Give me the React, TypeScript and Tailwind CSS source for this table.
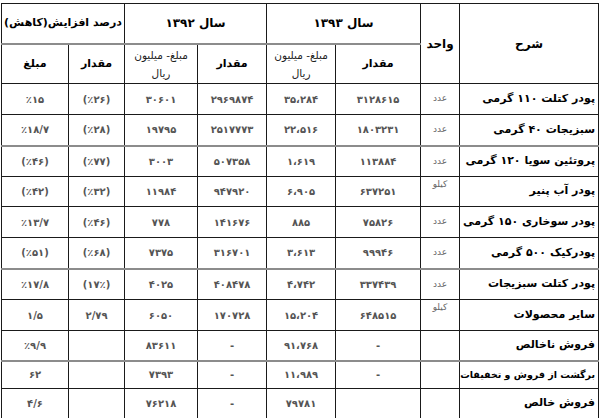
import React from "react";

type Row = {
  name: string;
  small?: boolean;
  unit: string;
  unitTop?: boolean;
  q93: string;
  a93: string;
  q92: string;
  a92: string;
  pq: string;
  pa: string;
  grayBottom?: boolean;
  h: string;
};

const rows: Row[] = [
  { name: "پودر کتلت ۱۱۰ گرمی", unit: "عدد", q93: "۳۱۲۸۶۱۵", a93: "۳۵،۲۸۴", q92: "۲۹۶۹۸۷۴", a92: "۳۰۶۰۱", pq: "(٪۲۶)", pa: "٪۱۵", h: "h-[31px]" },
  { name: "سبزیجات ۴۰ گرمی", unit: "عدد", q93: "۱۸۰۳۲۳۱", a93: "۲۲،۵۱۶", q92: "۲۵۱۷۷۷۳", a92: "۱۹۷۹۵", pq: "(٪۲۸)", pa: "٪۱۸/۷", h: "h-[31px]", grayBottom: true },
  { name: "پروتئین سویا ۱۲۰ گرمی", unit: "عدد", q93: "۱۱۳۸۸۴", a93: "۱،۶۱۹", q92: "۵۰۷۳۵۸", a92: "۳۰۰۳", pq: "(٪۷۷)", pa: "(٪۴۶)", h: "h-[31px]" },
  { name: "پودر آب پنیر", unit: "کیلو", unitTop: true, q93: "۶۳۷۲۵۱", a93: "۶،۹۰۵", q92: "۹۴۷۹۲۰", a92: "۱۱۹۸۴", pq: "(٪۳۲)", pa: "(٪۴۲)", h: "h-[30px]" },
  { name: "پودر سوخاری ۱۵۰ گرمی", unit: "عدد", q93: "۷۵۸۲۶", a93: "۸۸۵", q92: "۱۴۱۶۷۶", a92: "۷۷۸", pq: "(٪۴۶)", pa: "٪۱۳/۷", h: "h-[31px]" },
  { name: "پودرکیک ۵۰۰ گرمی", unit: "عدد", q93: "۹۹۹۴۶", a93: "۳،۶۱۳", q92: "۳۱۶۷۰۱", a92: "۷۳۷۵", pq: "(٪۶۸)", pa: "(٪۵۱)", h: "h-[31px]", grayBottom: true },
  { name: "پودر کتلت سبزیجات", unit: "عدد", q93: "۳۳۷۴۳۹", a93: "۴،۷۴۲", q92: "۴۰۸۴۷۸", a92: "۴۰۲۵", pq: "(۱۷٪)", pa: "٪۱۷/۸", h: "h-[31px]" },
  { name: "سایر محصولات", unit: "کیلو", unitTop: true, q93: "۶۴۸۵۱۵", a93: "۱۵،۲۰۴", q92: "۱۷۰۷۲۸", a92: "۶۰۵۰", pq: "۲/۷۹", pa: "۱/۵", h: "h-[31px]" },
  { name: "فروش ناخالص", unit: "", q93: "-", a93: "۹۱،۷۶۸", q92: "-", a92: "۸۳۶۱۱", pq: "", pa: "٪۹/۹", h: "h-[30px]", grayBottom: true },
  { name: "برگشت از فروش و تخفیفات", small: true, unit: "", q93: "-", a93: "۱۱،۹۸۹", q92: "-", a92: "۷۳۹۳", pq: "", pa: "۶۲", h: "h-[28px]" },
  { name: "فروش خالص", unit: "", q93: "", a93: "۷۹۷۸۱", q92: "-", a92: "۷۶۲۱۸", pq: "", pa: "۴/۶", h: "h-[30px]" },
];

const font = { fontFamily: '"DejaVu Sans", "Noto Sans", sans-serif' };

export default function App() {
  const cellB = "border border-[#1a1a1a] p-0";
  const num = "text-center align-middle text-[10px] font-bold text-[#555]";
  return (
    <div className="w-[600px] h-[418px] overflow-hidden bg-white pt-[3px] pl-[1px]" style={font}>
      <table dir="rtl" className="table-fixed border-collapse w-[598px]">
        <colgroup>
          <col className="w-[139px]" />
          <col className="w-[39px]" />
          <col className="w-[85px]" />
          <col className="w-[69px]" />
          <col className="w-[69px]" />
          <col className="w-[73px]" />
          <col className="w-[56px]" />
          <col className="w-[67px]" />
        </colgroup>
        <thead>
          <tr className="h-[40px]">
            <th rowSpan={2} className={`${cellB} text-[12px] font-bold text-black text-center align-middle`}>شرح</th>
            <th rowSpan={2} className={`${cellB} text-[12px] font-bold text-black text-center align-middle`}>واحد</th>
            <th colSpan={2} className={`${cellB} border-b-2 border-b-[#8c8c8c] text-[12px] font-bold text-black text-center align-middle`}>سال ۱۳۹۳</th>
            <th colSpan={2} className={`${cellB} border-b-2 border-b-[#8c8c8c] text-[12px] font-bold text-black text-center align-middle`}>سال ۱۳۹۲</th>
            <th colSpan={2} className={`${cellB} border-b-2 border-b-[#8c8c8c] text-[11px] font-bold text-black text-center align-middle`}>درصد افزایش(کاهش)</th>
          </tr>
          <tr className="h-[40px]">
            <th className={`${cellB} text-[11px] font-bold text-black text-center align-middle`}>مقدار</th>
            <th className={`${cellB} text-[10.5px] font-normal text-[#222] text-center align-middle leading-[18px]`}>
              مبلغ- میلیون
              <br />
              ریال
            </th>
            <th className={`${cellB} text-[11px] font-bold text-black text-center align-middle`}>مقدار</th>
            <th className={`${cellB} text-[10.5px] font-normal text-[#222] text-center align-middle leading-[18px]`}>
              مبلغ- میلیون
              <br />
              ریال
            </th>
            <th className={`${cellB} text-[11px] font-bold text-black text-center align-middle`}>مقدار</th>
            <th className={`${cellB} text-[11px] font-bold text-black text-center align-middle`}>مبلغ</th>
          </tr>
        </thead>
        <tbody>
          {rows.map((r, i) => {
            const gb = r.grayBottom ? "border-b-2 border-b-[#8c8c8c]" : "";
            return (
              <tr key={i} className={r.h}>
                <td className={`${cellB} ${gb} text-right align-middle pr-[3px] ${r.small ? "text-[9.5px]" : "text-[11px]"} font-bold text-black whitespace-nowrap overflow-hidden`}>{r.name}</td>
                <td className={`${cellB} ${gb} text-center ${r.unitTop ? "align-top pt-[1px]" : "align-middle"} text-[9px] text-[#666]`}>{r.unit}</td>
                <td className={`${cellB} ${gb} ${num}`} dir="ltr">{r.q93}</td>
                <td className={`${cellB} ${gb} ${num}`} dir="ltr">{r.a93}</td>
                <td className={`${cellB} ${gb} ${num}`} dir="ltr">{r.q92}</td>
                <td className={`${cellB} ${gb} ${num}`} dir="ltr">{r.a92}</td>
                <td className={`${cellB} ${gb} ${num}`} dir="ltr">{r.pq}</td>
                <td className={`${cellB} ${gb} ${num}`} dir="ltr">{r.pa}</td>
              </tr>
            );
          })}
        </tbody>
      </table>
    </div>
  );
}
